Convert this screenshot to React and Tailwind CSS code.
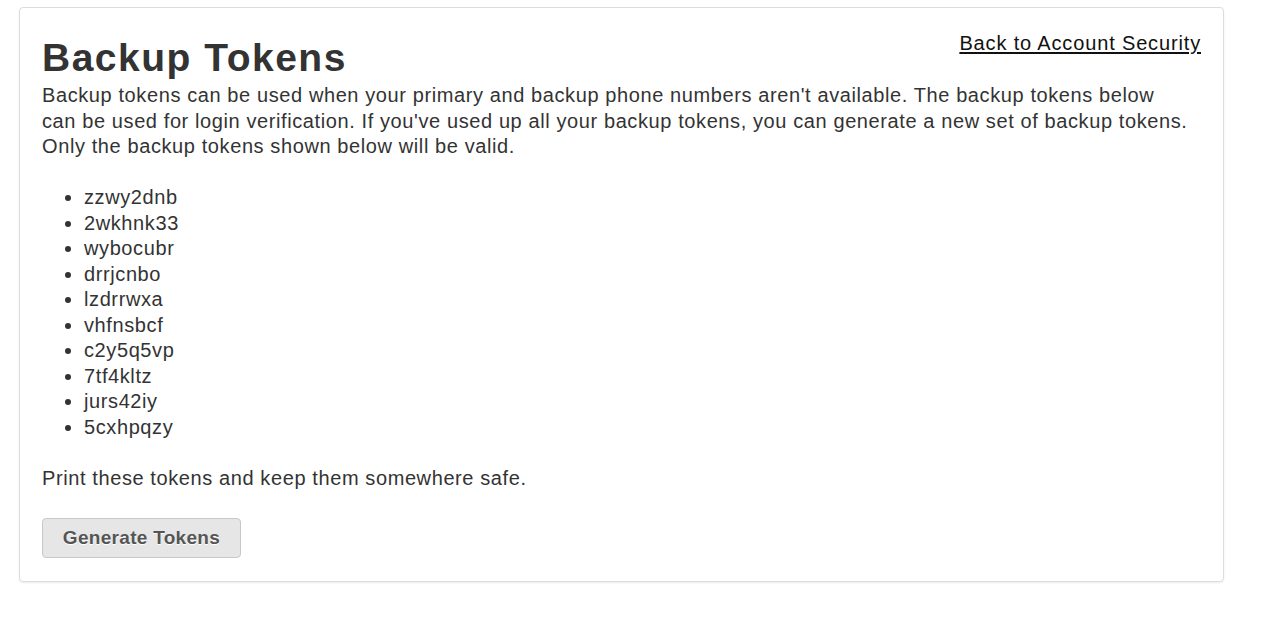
const tokens = [
  'zzwy2dnb',
  '2wkhnk33',
  'wybocubr',
  'drrjcnbo',
  'lzdrrwxa',
  'vhfnsbcf',
  'c2y5q5vp',
  '7tf4kltz',
  'jurs42iy',
  '5cxhpqzy',
]

export default function App() {
  return (
    <div className="min-h-screen bg-white font-['Liberation_Sans',Arial,sans-serif] text-[#333]">
      <div className="ml-[19px] pt-[7px] w-[1205px]">
        <div className="rounded-[4px] border border-[#dcdcdc] shadow-[0_1px_2px_rgba(0,0,0,0.08)] px-[22px] pt-[29px] pb-[23px] text-[20px] leading-[25.5px] tracking-[0.6px]">
          <a
            href="#"
            className="float-right mt-[-6px] text-[#111] underline underline-offset-2 tracking-[0.85px]"
          >
            Back to Account Security
          </a>
          <h1 className="text-[39px] font-bold leading-[42px] mb-[4px] tracking-[1.5px] text-[#333]">Backup Tokens</h1>
          <p>
            Backup tokens can be used when your primary and backup phone numbers aren't available. The backup tokens below
            <br />
            can be used for login verification. If you've used up all your backup tokens, you can generate a new set of backup tokens.
            <br />
            Only the backup tokens shown below will be valid.
          </p>
          <ul className="list-disc pl-[42px] my-[25.5px]">
            {tokens.map((t) => (
              <li key={t}>{t}</li>
            ))}
          </ul>
          <p className="mb-[27px]">Print these tokens and keep them somewhere safe.</p>
          <button className="h-[40px] w-[199px] rounded-[4px] border border-[#c8c8c8] bg-[#e6e6e6] text-[19px] font-bold tracking-[0.3px] text-[#555] [text-shadow:0_1px_0_#fff]">
            Generate Tokens
          </button>
        </div>
      </div>
    </div>
  )
}
